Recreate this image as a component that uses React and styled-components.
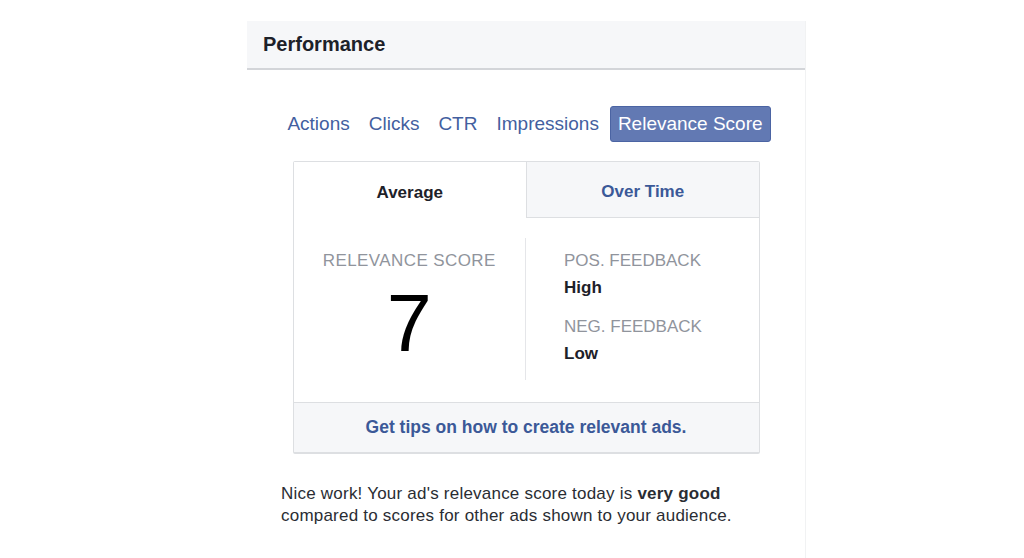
import styled, { createGlobalStyle } from 'styled-components'

const GlobalStyle = createGlobalStyle`
	body {
		margin: 0;
		background: #fff;
		font-family: 'Liberation Sans', Arial, Helvetica, sans-serif;
		color: #1d2129;
	}
`

const metrics = ['Actions', 'Clicks', 'CTR', 'Impressions', 'Relevance Score']

function App() {
	return (
		<>
			<GlobalStyle />
			<Panel>
				<Header>Performance</Header>
				<MetricRow>
					{metrics.map(m => (
						<Metric key={m} $active={m === 'Relevance Score'}>
							{m}
						</Metric>
					))}
				</MetricRow>
				<Card>
					<Tabs>
						<Tab $active>Average</Tab>
						<Tab>Over Time</Tab>
					</Tabs>
					<Body>
						<ScoreCol>
							<Label $wide>RELEVANCE SCORE</Label>
							<Score>7</Score>
						</ScoreCol>
						<FeedbackCol>
							<Label>POS. FEEDBACK</Label>
							<Value>High</Value>
							<Label $next>NEG. FEEDBACK</Label>
							<Value>Low</Value>
						</FeedbackCol>
					</Body>
					<Footer>
						<TipLink>Get tips on how to create relevant ads.</TipLink>
					</Footer>
				</Card>
				<Note>
					Nice work! Your ad's relevance score today is <b>very good</b>
					<br />
					compared to scores for other ads shown to your audience.
				</Note>
			</Panel>
		</>
	)
}
export default App

const Panel = styled.div`
	width: 558px;
	min-height: 537px;
	margin: 21px 0 0 247px;
	border-right: 1px solid #f1f2f3;
`

const Header = styled.div`
	height: 47px;
	display: flex;
	align-items: center;
	padding-left: 16px;
	background: #f6f7f9;
	border-bottom: 2px solid #d3d5d9;
	font-size: 20px;
	font-weight: 700;
	color: #1d2129;
`

const MetricRow = styled.div`
	display: flex;
	justify-content: center;
	gap: 3px;
	margin-top: 36px;
	padding-right: 2px;
`

const Metric = styled.div`
	height: 34px;
	display: flex;
	align-items: center;
	padding: 0 7px;
	font-size: 19px;
	border-radius: 3px;
	border: 1px solid ${({ $active }) => ($active ? '#4b64a3' : 'transparent')};
	background: ${({ $active }) => ($active ? '#6279b3' : 'transparent')};
	color: ${({ $active }) => ($active ? '#fff' : '#435f9f')};
`

const Card = styled.div`
	width: 465px;
	margin: 19px auto 0;
	border: 1px solid #dddfe2;
	border-bottom-width: 2px;
	border-radius: 2px;
	background: #fff;
`

const Tabs = styled.div`
	display: flex;
	height: 56px;
`

const Tab = styled.div`
	width: 50%;
	box-sizing: border-box;
	display: flex;
	align-items: center;
	justify-content: center;
	padding-top: 5px;
	font-size: 17px;
	font-weight: 700;
	color: ${({ $active }) => ($active ? '#1d2129' : '#3b5998')};
	background: ${({ $active }) => ($active ? '#fff' : '#f6f7f9')};
	border-left: ${({ $active }) => ($active ? 'none' : '1px solid #dddfe2')};
	border-bottom: ${({ $active }) => ($active ? 'none' : '1px solid #dddfe2')};
`

const Body = styled.div`
	display: flex;
	height: 142px;
	padding: 20px 0 22px;
`

const ScoreCol = styled.div`
	width: 50%;
	box-sizing: border-box;
	display: flex;
	flex-direction: column;
	align-items: center;
	padding-top: 13px;
	border-right: 1px solid #e5e6e9;
`

const FeedbackCol = styled.div`
	width: 50%;
	box-sizing: border-box;
	display: flex;
	flex-direction: column;
	padding: 13px 0 0 38px;
`

const Label = styled.div`
	font-size: 17px;
	line-height: 20px;
	color: #90949c;
	letter-spacing: ${({ $wide }) => ($wide ? '0.4px' : '0')};
	margin-top: ${({ $next }) => ($next ? '19px' : '0')};
`

const Value = styled.div`
	font-size: 17px;
	line-height: 20px;
	font-weight: 700;
	color: #1d2129;
	margin-top: 7px;
`

const Score = styled.div`
	font-size: 81px;
	line-height: 1;
	margin-top: 12px;
	color: #000;
`

const Footer = styled.div`
	height: 49px;
	display: flex;
	align-items: center;
	justify-content: center;
	background: #f6f7f9;
	border-top: 1px solid #dddfe2;
`

const TipLink = styled.span`
	font-size: 17.5px;
	font-weight: 700;
	color: #3b5998;
`

const Note = styled.p`
	margin: 29px 0 0 34px;
	font-size: 17px;
	line-height: 22px;
	letter-spacing: 0.22px;
	color: #2a2d33;

	b {
		font-weight: 700;
	}
`
